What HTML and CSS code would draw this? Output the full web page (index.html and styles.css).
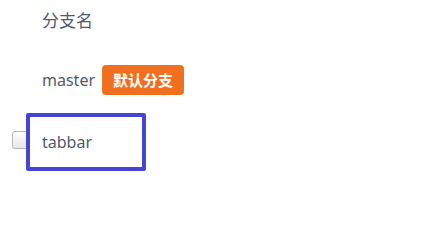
FILE: index.html
```html
<!DOCTYPE html>
<html lang="zh">
<head>
<meta charset="utf-8">
<link rel="stylesheet" href="styles.css">
</head>
<body>
<div class="page">
  <div class="title">分支名</div>
  <div class="branch-row">
    <span class="branch-name">master</span>
    <span class="badge">默认分支</span>
  </div>
  <div class="select-row">
    <div class="checkbox"></div>
    <div class="focus-box">tabbar</div>
  </div>
</div>
</body>
</html>
```
FILE: styles.css
```css
html, body {
  margin: 0;
  padding: 0;
  background: #ffffff;
}
.page {
  font-family: "Noto Sans", "Noto Sans CJK SC", sans-serif;
  font-size: 16px;
  color: #515a6e;
  padding-top: 9px;
}
.title {
  padding-left: 42px;
  font-size: 17px;
  line-height: 24px;
  height: 24px;
}
.branch-row {
  margin-top: 32px;
  padding-left: 42px;
  display: flex;
  align-items: center;
  height: 30px;
  gap: 7px;
}
.branch-name {
  line-height: 24px;
}
.badge {
  background: #f07020;
  color: #ffffff;
  font-family: "Noto Sans CJK SC", sans-serif;
  font-weight: bold;
  font-size: 15px;
  line-height: 30px;
  height: 30px;
  padding: 0 11px;
  border-radius: 4px;
}
.select-row {
  margin-top: 18px;
  padding-left: 12px;
  display: flex;
  align-items: flex-start;
}
.checkbox {
  margin-top: 18px;
  width: 17px;
  height: 18px;
  box-sizing: border-box;
  border: 1px solid #b8b8b8;
  border-radius: 3px;
  background: linear-gradient(#ffffff, #e6e6e6);
}
.focus-box {
  margin-left: -3px;
  width: 120px;
  height: 58px;
  box-sizing: border-box;
  border: 4px solid #4444d6;
  border-radius: 2px;
  background: #ffffff;
  padding-left: 12px;
  display: flex;
  align-items: center;
}
```
